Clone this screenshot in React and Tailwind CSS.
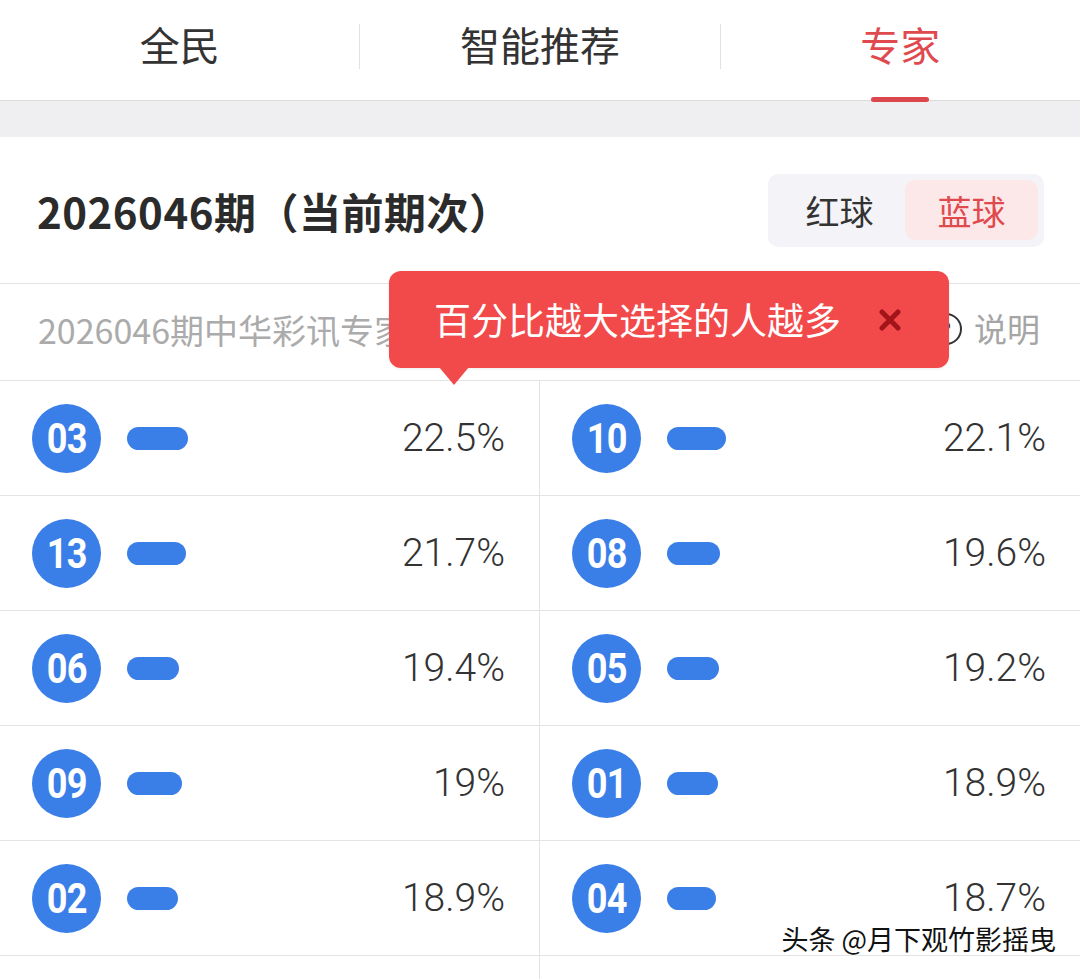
import React from "react";

const rows = [
  [
    { n: "03", p: "22.5%", w: 61 },
    { n: "10", p: "22.1%", w: 59 },
  ],
  [
    { n: "13", p: "21.7%", w: 59 },
    { n: "08", p: "19.6%", w: 53 },
  ],
  [
    { n: "06", p: "19.4%", w: 52 },
    { n: "05", p: "19.2%", w: 52 },
  ],
  [
    { n: "09", p: "19%", w: 55 },
    { n: "01", p: "18.9%", w: 51 },
  ],
  [
    { n: "02", p: "18.9%", w: 51 },
    { n: "04", p: "18.7%", w: 49 },
  ],
  [
    { n: "", p: "", w: 0 },
    { n: "", p: "", w: 0 },
  ],
];

const cjk = { fontFamily: '"Noto Sans CJK SC", "Noto Sans", sans-serif' };
const num = { fontFamily: 'Roboto, "Noto Sans CJK SC", sans-serif' };

function Cell({ item, left }) {
  return (
    <div
      className={
        "h-[115px] flex items-center pl-[32px] pr-[34px] border-b border-[#e3e3e3] " +
        (left ? "border-r" : "")
      }
    >
      {item.n && (
        <>
          <div
            className="w-[69px] h-[69px] rounded-full bg-[#3a7ee8] flex items-center justify-center text-white text-[43px] font-bold leading-none"
            style={num}
          >
            <span className="inline-block scale-x-[0.84] tracking-[-1px]">{item.n}</span>
          </div>
          <div
            className="ml-[26px] h-[23px] rounded-full bg-[#3a7ee8]"
            style={{ width: item.w }}
          />
          <div
            className="ml-auto text-[39px] font-light text-[#333] leading-none"
            style={num}
          >
            {item.p}
          </div>
        </>
      )}
    </div>
  );
}

export default function App() {
  return (
    <div className="relative w-[1080px] h-[979px] overflow-hidden bg-white" style={cjk}>
      {/* Tabs */}
      <div className="h-[101px] flex items-center border-b border-[#dcdcdc]">
        <div className="flex-1 h-full flex items-center justify-center text-[40px] text-[#333] pb-[13px]">
          全民
        </div>
        <div className="w-px h-[45px] bg-[#e2e2e2] mb-[8px]" />
        <div className="flex-1 h-full flex items-center justify-center text-[40px] text-[#333] pb-[13px]">
          智能推荐
        </div>
        <div className="w-px h-[45px] bg-[#e2e2e2] mb-[8px]" />
        <div className="relative flex-1 h-full flex items-center justify-center text-[40px] text-[#df4a4f] pb-[13px]">
          专家
          <div className="absolute bottom-[-2px] left-1/2 -translate-x-1/2 w-[58px] h-[5px] rounded-full bg-[#dc474c]" />
        </div>
      </div>

      {/* gray band */}
      <div className="h-[36px] bg-[#efeff1]" />

      {/* title row */}
      <div className="h-[147px] flex items-center justify-between pl-[37px] pr-[36px] border-b border-[#e3e3e3]">
        <div className="text-[42px] font-bold text-[#2b2b2b] tracking-[0.5px]">
          2026046期（当前期次）
        </div>
        <div className="w-[276px] h-[73px] rounded-[10px] bg-[#f4f4f8] flex items-center p-[6px]">
          <div className="flex-1 flex items-center justify-center text-[34px] text-[#333]">
            红球
          </div>
          <div className="w-[133px] h-[60px] rounded-[10px] bg-[#fde8e9] flex items-center justify-center text-[34px] text-[#df4a4f]">
            蓝球
          </div>
        </div>
      </div>

      {/* sub row */}
      <div className="h-[97px] flex items-center pl-[38px] pr-[40px] border-b border-[#e3e3e3] pb-[6px]">
        <div className="w-[358px] overflow-hidden text-[34px] text-[#ababab] whitespace-nowrap">
          2026046期中华彩讯专家蓝球推荐
        </div>
        <div className="ml-auto flex items-center gap-[12px] text-[33px] text-[#a5a5a5]">
          <div className="w-[32px] h-[32px] rounded-full border-[2.5px] border-[#333] flex items-center justify-center text-[22px] text-[#333] leading-none">
            ?
          </div>
          说明
        </div>
      </div>

      {/* grid */}
      <div className="grid grid-cols-2">
        {rows.map((r, i) => (
          <React.Fragment key={i}>
            <Cell item={r[0]} left />
            <Cell item={r[1]} />
          </React.Fragment>
        ))}
      </div>

      {/* tooltip */}
      <div className="absolute left-[389px] top-[271px] w-[560px] h-[97px] rounded-[12px] bg-[#f24a4b] flex items-center pl-[45px] shadow-[0_1px_3px_rgba(0,0,0,0.08)]">
        <span className="text-[37px] text-white leading-none">百分比越大选择的人越多</span>
        <svg className="ml-[38px]" width="22" height="22" viewBox="0 0 22 22">
          <path d="M3 3 L19 19 M19 3 L3 19" stroke="#a3131a" strokeWidth="5" strokeLinecap="round" />
        </svg>
        <div className="absolute left-[50px] top-[96px] w-0 h-0 border-l-[15px] border-r-[15px] border-t-[18px] border-l-transparent border-r-transparent border-t-[#f24a4b]" />
      </div>

      {/* watermark */}
      <div
        className="absolute right-[24px] top-[925px] text-[27px] text-[#111] leading-none"
        style={{ textShadow: "0 0 2px #fff, 0 0 2px #fff, 0 0 3px #fff" }}
      >
        头条 @月下观竹影摇曳
      </div>
    </div>
  );
}
